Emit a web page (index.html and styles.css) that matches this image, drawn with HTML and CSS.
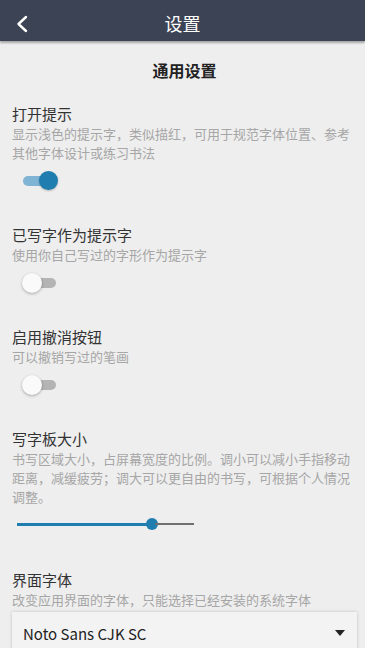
FILE: index.html
```html
<!DOCTYPE html>
<html lang="zh-CN">
<head>
    <meta charset="UTF-8">
    <meta name="viewport" content="width=device-width, initial-scale=1.0">
    <title>设置</title>
    <link rel="stylesheet" href="styles.css">
</head>
<body>
    <div class="header">
        <svg class="back" width="14" height="18" viewBox="0 0 14 18"><path d="M11 2 L3.5 9 L11 16" fill="none" stroke="#fff" stroke-width="2.4" stroke-linecap="round" stroke-linejoin="round"/></svg>
        <h1>设置</h1>
    </div>

    <div class="content">
        <h2 class="section-title">通用设置</h2>

        <div class="item">
            <div class="item-title">打开提示</div>
            <div class="item-desc">显示浅色的提示字，类似描红，可用于规范字体位置、参考其他字体设计或练习书法</div>
            <div class="switch on"><span class="track"></span><span class="thumb"></span></div>
        </div>

        <div class="item">
            <div class="item-title">已写字作为提示字</div>
            <div class="item-desc">使用你自己写过的字形作为提示字</div>
            <div class="switch"><span class="track"></span><span class="thumb"></span></div>
        </div>

        <div class="item">
            <div class="item-title">启用撤消按钮</div>
            <div class="item-desc">可以撤销写过的笔画</div>
            <div class="switch"><span class="track"></span><span class="thumb"></span></div>
        </div>

        <div class="item">
            <div class="item-title">写字板大小</div>
            <div class="item-desc">书写区域大小，占屏幕宽度的比例。调小可以减小手指移动距离，减缓疲劳；调大可以更自由的书写，可根据个人情况调整。</div>
            <div class="slider">
                <span class="slider-fill" style="width: 76%"></span>
                <span class="slider-thumb"></span>
                <span class="slider-rest"></span>
            </div>
        </div>

        <div class="item">
            <div class="item-title">界面字体</div>
            <div class="item-desc">改变应用界面的字体，只能选择已经安装的系统字体</div>
            <div class="dropdown">
                <span>Noto Sans CJK SC</span>
                <svg width="10" height="6" viewBox="0 0 10 6"><path d="M0 0 H10 L5 6 Z" fill="#222"/></svg>
            </div>
        </div>
    </div>
</body>
</html>
```

FILE: styles.css
```css
body { margin: 0; background: #eeeeee; font-family: "Noto Sans CJK SC", "Noto Sans", sans-serif; overflow: hidden; }
.header { height: 41px; box-sizing: border-box; padding-top: 4px; background: #3c4354; color: white; display: flex; align-items: center; justify-content: center; position: relative; box-shadow: 0 2px 2px rgba(0,0,0,0.3); }
.header h1 { margin: 0; font-size: 18px; font-weight: normal; line-height: 24px; }
.back { position: absolute; left: 15px; top: 15px; }
.content { padding: 0 8px 0 12px; }
.section-title { margin: 18px 0 23px; font-size: 16px; line-height: 22px; font-weight: bold; text-align: center; color: #222; }
.item { margin-bottom: 34px; }
.item-title { font-size: 15px; line-height: 20px; color: #333; }
.item-desc { font-size: 13px; line-height: 19px; color: #a6a6a6; }
.switch { position: relative; width: 36px; height: 20px; margin: 9px 0 0 10px; }
.switch .track { position: absolute; left: 1px; right: 2px; top: 5px; height: 10px; border-radius: 5px; background: #b4b4b4; }
.switch .thumb { position: absolute; left: 0; top: 0; width: 20px; height: 20px; border-radius: 50%; background: #fafafa; box-shadow: 0 1px 3px rgba(0,0,0,0.3); }
.switch.on .track { background: #80b4d4; }
.switch.on .thumb { left: auto; right: 0; width: 19px; height: 19px; background: #1f7db0; box-shadow: 0 1px 2px rgba(0,0,0,0.25); }
.slider { display: flex; align-items: center; width: 177px; height: 24px; margin: 6px 0 0 5px; }
.slider-fill { height: 3px; background: #1f7db0; }
.slider-thumb { width: 12px; height: 12px; border-radius: 50%; background: #1f7db0; margin: 0 -3px 0 -6px; flex-shrink: 0; }
.slider-rest { flex: 1; height: 2px; background: #6f6f6f; }
.dropdown { display: flex; align-items: center; justify-content: space-between; height: 48px; margin-top: 3px; padding: 0 12px 8px 11px; box-sizing: border-box; background: #f3f3f3; box-shadow: 0 0 3px rgba(0,0,0,0.2); font-size: 15px; color: #222; }
.dropdown span { line-height: 20px; padding-top: 4px; }
.dropdown svg { margin-top: 2px; }
```
